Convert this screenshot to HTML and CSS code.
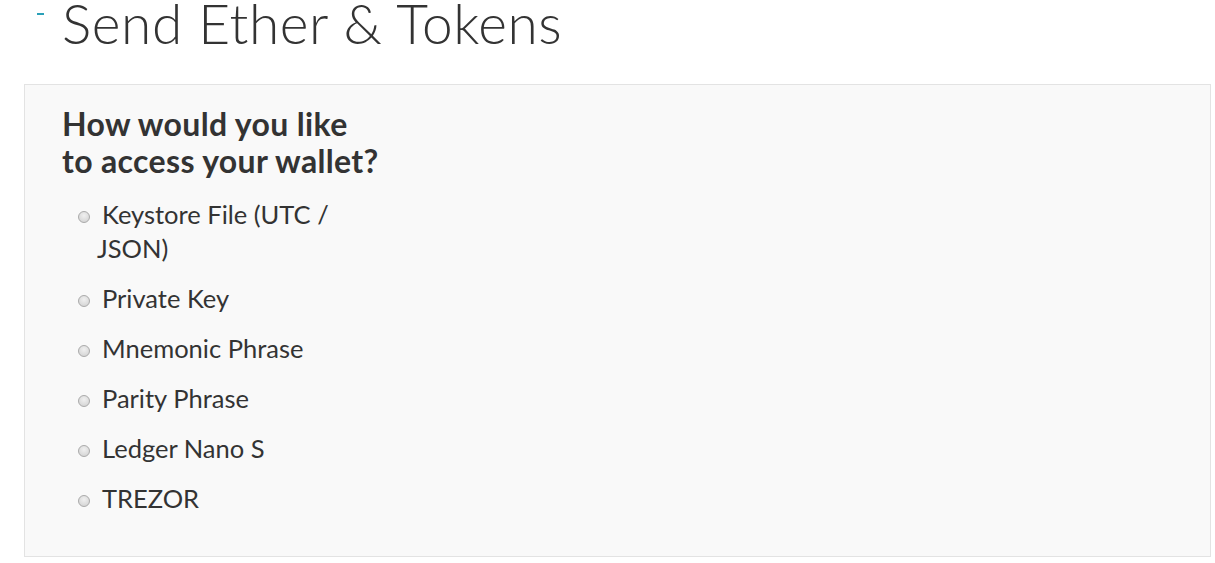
FILE: index.html
```html
<!DOCTYPE html>
<html lang="en">
<head>
  <meta charset="UTF-8">
  <meta name="viewport" content="width=device-width, initial-scale=1.0">
  <title>Send Ether &amp; Tokens</title>
  <link rel="stylesheet" href="styles.css">
</head>
<body>
  <header class="page-head">
    <span class="dash"></span>
    <h1>Send Ether &amp; Tokens</h1>
  </header>

  <div class="wrap">
    <section class="panel">
      <div class="col">
        <h4>How would you like<br>to access your wallet?</h4>
        <label class="radio"><input type="radio" name="wallet"><span>Keystore File (UTC / JSON)</span></label>
        <label class="radio"><input type="radio" name="wallet"><span>Private Key</span></label>
        <label class="radio"><input type="radio" name="wallet"><span>Mnemonic Phrase</span></label>
        <label class="radio"><input type="radio" name="wallet"><span>Parity Phrase</span></label>
        <label class="radio"><input type="radio" name="wallet"><span>Ledger Nano S</span></label>
        <label class="radio"><input type="radio" name="wallet"><span>TREZOR</span></label>
      </div>
    </section>
  </div>
</body>
</html>
```

FILE: styles.css
```css
body {
  font-family: Lato, "Open Sans", sans-serif;
  background-color: #ffffff;
  color: #333333;
  margin: 0;
  padding: 0;
}
.page-head {
  display: flex;
  align-items: flex-start;
  height: 84px;
}
.dash {
  display: block;
  width: 7px;
  height: 2px;
  margin: 13px 0 0 37px;
  background-color: #2aa0b8;
}
.page-head h1 {
  margin: 0 0 0 18px;
  font-size: 55px;
  font-weight: 300;
  line-height: 46px;
  letter-spacing: 0.6px;
  color: #333333;
}
.wrap {
  padding: 0 4px 0 24px;
}
.panel {
  box-sizing: border-box;
  height: 473px;
  background-color: #f9f9f9;
  border: 1px solid #e3e3e3;
  padding: 20px 37px 0;
}
.col {
  width: 300px;
}
.col h4 {
  margin: 0 0 18px;
  font-size: 32px;
  font-weight: 700;
  line-height: 37px;
  letter-spacing: 0.35px;
  white-space: nowrap;
  color: #333333;
}
.radio {
  display: block;
  padding-left: 35px;
  text-indent: -19px;
  font-size: 25.5px;
  line-height: 34px;
  margin-bottom: 16px;
  color: #333333;
}
.radio input {
  appearance: none;
  -webkit-appearance: none;
  box-sizing: border-box;
  width: 12px;
  height: 12px;
  margin: 0 12px 0 0;
  vertical-align: 1px;
  border: 1px solid #aaaaaa;
  border-radius: 50%;
  background: radial-gradient(circle at 50% 35%, #f0f0f0, #cfcfcf);
}
```
